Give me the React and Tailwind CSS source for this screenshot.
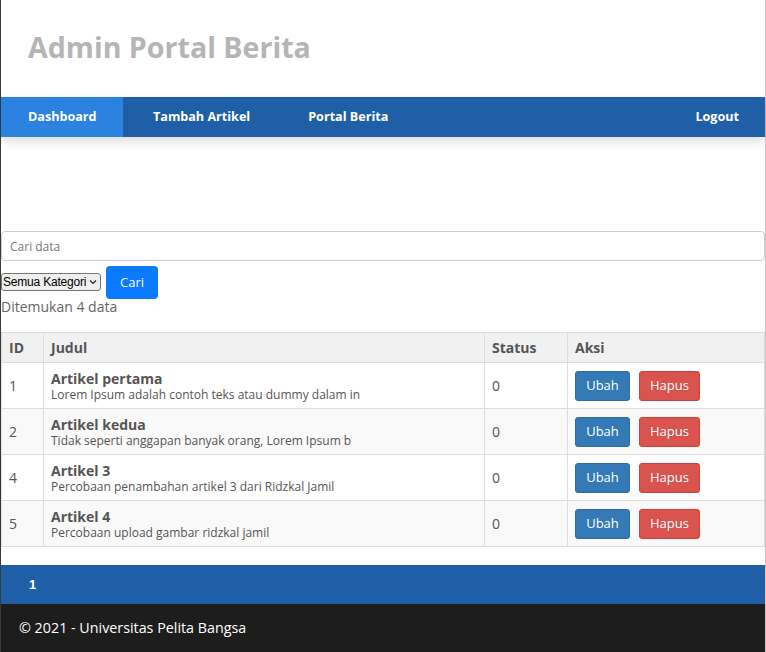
import React from "react";

const rows = [
  { id: 1, title: "Artikel pertama", desc: "Lorem Ipsum adalah contoh teks atau dummy dalam in", status: 0 },
  { id: 2, title: "Artikel kedua", desc: "Tidak seperti anggapan banyak orang, Lorem Ipsum b", status: 0 },
  { id: 4, title: "Artikel 3", desc: "Percobaan penambahan artikel 3 dari Ridzkal Jamil", status: 0 },
  { id: 5, title: "Artikel 4", desc: "Percobaan upload gambar ridzkal jamil", status: 0 },
];

export default function App() {
  return (
    <div className="min-h-[652px] bg-white border-l border-l-[#3a3a3a] border-r border-r-[#c8c8c8] font-['Open_Sans',sans-serif] text-[#555]">
      {/* Header */}
      <header className="h-[97px] flex items-center px-[27px]">
        <h1 className="text-[28.6px] font-bold text-[#b5b5b5] mt-[-2px]">Admin Portal Berita</h1>
      </header>

      {/* Nav */}
      <nav className="h-10 bg-[#1f5fa8] flex text-white text-[12.6px] font-bold shadow-[0_4px_10px_rgba(0,0,0,0.15)] relative">
        <a className="w-[122px] bg-[#2b82e0] flex items-center pl-[27px]">Dashboard</a>
        <a className="flex items-center pl-[30px] pr-[28px]">Tambah Artikel</a>
        <a className="flex items-center pl-[30px]">Portal Berita</a>
        <a className="ml-auto flex items-center pr-[26px]">Logout</a>
      </nav>

      {/* Search */}
      <div className="pt-[94px]">
        <input
          placeholder="Cari data"
          className="w-full h-[30px] border border-[#ccc] rounded-[4px] px-2 text-[12px] placeholder:text-[#777] outline-none"
        />
        <div className="flex items-start gap-[5px] mt-[5px]">
          <span className="relative mt-[7px] inline-flex">
            <select className="appearance-none w-[100px] h-[18px] border border-[#767676] rounded-[3px] bg-[#efefef] pl-[1px] pr-[10px] text-[12px] tracking-[-0.2px] leading-[16px] font-['Liberation_Sans',sans-serif] text-black">
              <option>Semua Kategori</option>
            </select>
            <svg className="absolute right-[4px] top-[6px] pointer-events-none" width="8" height="6" viewBox="0 0 8 6">
              <path d="M1 1.5 L4 4.5 L7 1.5" fill="none" stroke="#222" strokeWidth="1.2" />
            </svg>
          </span>
          <button className="w-[52px] h-[33px] bg-[#0a7bff] text-white text-[13px] rounded-[4px]">Cari</button>
        </div>
        <p className="text-[14px] text-[#666] leading-[16px] mt-0">Ditemukan 4 data</p>
      </div>

      {/* Table */}
      <table className="w-full mt-[17px] border-collapse text-[14px]">
        <thead>
          <tr className="bg-[#f1f1f1] h-[30px] text-left">
            <th className="w-[42px] border border-[#ddd] pl-[7px] font-bold">ID</th>
            <th className="border border-[#ddd] pl-[7px] font-bold">Judul</th>
            <th className="w-[83px] border border-[#ddd] pl-[7px] font-bold">Status</th>
            <th className="w-[197px] border border-[#ddd] pl-[7px] font-bold">Aksi</th>
          </tr>
        </thead>
        <tbody>
          {rows.map((r, i) => (
            <tr key={r.id} className={i % 2 === 1 ? "bg-[#f9f9f9] h-[46px]" : "bg-white h-[46px]"}>
              <td className="border border-[#ddd] pl-[7px] text-[14px]">{r.id}</td>
              <td className="border border-[#ddd] pl-[7px]">
                <div className="font-bold text-[14px] leading-[17px]">{r.title}</div>
                <div className="text-[12px] leading-[15px]">{r.desc}</div>
              </td>
              <td className="border border-[#ddd] pl-[7px]">{r.status}</td>
              <td className="border border-[#ddd] pl-[7px]">
                <div className="flex gap-[9px]">
                  <button className="w-[55px] h-[30px] bg-[#337ab7] border border-[#2e6da4] text-white text-[13px] rounded-[3px]">Ubah</button>
                  <button className="w-[61px] h-[30px] bg-[#d9534f] border border-[#d43f3a] text-white text-[13px] rounded-[3px]">Hapus</button>
                </div>
              </td>
            </tr>
          ))}
        </tbody>
      </table>

      {/* Pagination */}
      <div className="mt-[18px] h-[39px] bg-[#1f5fa8] flex items-center pl-[28px] text-white text-[13px] font-bold font-['Liberation_Sans',sans-serif]">
        1
      </div>

      {/* Footer */}
      <footer className="h-[48px] bg-[#1d1d1d] flex items-center pl-[18px] text-white text-[14.3px]">
        © 2021 - Universitas Pelita Bangsa
      </footer>
    </div>
  );
}
